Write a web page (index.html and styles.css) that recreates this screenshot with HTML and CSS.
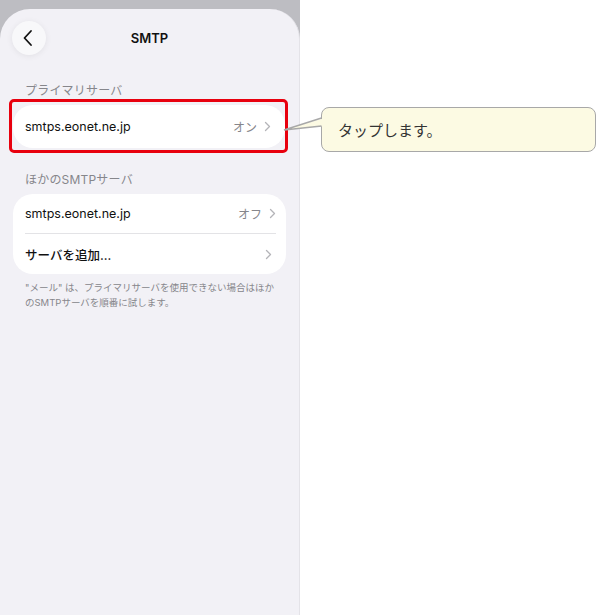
FILE: index.html
```html
<!DOCTYPE html>
<html lang="ja">
<head>
    <meta charset="UTF-8">
    <meta name="viewport" content="width=device-width, initial-scale=1.0">
    <title>SMTP</title>
    <link rel="stylesheet" href="styles.css">
</head>
<body>
    <div class="phone">
        <div class="sheet">
            <div class="nav">
                <div class="back-button">
                    <svg width="12" height="18" viewBox="0 0 12 18"><path d="M9 2 L2.5 9 L9 16" fill="none" stroke="#111" stroke-width="1.8" stroke-linecap="round" stroke-linejoin="round"/></svg>
                </div>
                <div class="nav-title">SMTP</div>
            </div>

            <div class="section-header primary-header">プライマリサーバ</div>
            <div class="highlight">
                <div class="card">
                    <div class="row">
                        <span class="row-label">smtps.eonet.ne.jp</span>
                        <span class="row-value">オン</span>
                        <span class="chevron">
                            <svg width="7" height="11" viewBox="0 0 7 11"><path d="M1.5 1.5 L5.5 5.5 L1.5 9.5" fill="none" stroke="#b4b4b8" stroke-width="1.3" stroke-linecap="round" stroke-linejoin="round"/></svg>
                        </span>
                    </div>
                </div>
            </div>

            <div class="section-header other-header">ほかのSMTPサーバ</div>
            <div class="card card-list">
                <div class="row row-divided">
                    <span class="row-label">smtps.eonet.ne.jp</span>
                    <span class="row-value">オフ</span>
                    <span class="chevron">
                        <svg width="7" height="11" viewBox="0 0 7 11"><path d="M1.5 1.5 L5.5 5.5 L1.5 9.5" fill="none" stroke="#b4b4b8" stroke-width="1.3" stroke-linecap="round" stroke-linejoin="round"/></svg>
                    </span>
                </div>
                <div class="row">
                    <span class="row-label row-label-bold">サーバを追加...</span>
                    <span class="chevron">
                        <svg width="7" height="11" viewBox="0 0 7 11"><path d="M1.5 1.5 L5.5 5.5 L1.5 9.5" fill="none" stroke="#b4b4b8" stroke-width="1.3" stroke-linecap="round" stroke-linejoin="round"/></svg>
                    </span>
                </div>
            </div>
            <div class="footnote">"メール" は、プライマリサーバを使用できない場合はほかのSMTPサーバを順番に試します。</div>
        </div>
    </div>

    <div class="callout">
        <svg class="callout-tail" width="42" height="30" viewBox="0 0 42 30">
            <path d="M42 11 L1 23 L42 19 Z" fill="#fcfae3"/>
            <polyline points="38.5,11 1,23 38.5,19" fill="none" stroke="#a8a8a8" stroke-width="1.5" stroke-linejoin="miter"/>
        </svg>
        <span class="callout-text">タップします。</span>
    </div>
</body>
</html>
```

FILE: styles.css
```css
body {
    margin: 0;
    font-family: 'Inter', 'Noto Sans CJK JP', sans-serif;
    background-color: #fff;
    position: relative;
    width: 601px;
    height: 615px;
    overflow: hidden;
}

.phone {
    width: 300px;
    height: 615px;
    background-color: #bdbdc2;
    padding-top: 9px;
    box-sizing: border-box;
}

.sheet {
    height: 100%;
    background-color: #f2f1f6;
    border-radius: 30px 30px 0 0;
    padding-top: 12px;
    box-sizing: border-box;
    border-right: 1px solid #e4e3e8;
}

.nav {
    position: relative;
    height: 34px;
    display: flex;
    align-items: center;
    justify-content: center;
}

.back-button {
    position: absolute;
    left: 12px;
    top: 0;
    width: 34px;
    height: 34px;
    border-radius: 50%;
    background-color: #f8f8fa;
    box-shadow: 0 1px 6px rgba(0, 0, 0, 0.07);
    display: flex;
    align-items: center;
    justify-content: center;
}

.back-button svg {
    margin-left: -2px;
}

.nav-title {
    font-size: 13px;
    font-weight: 600;
    color: #111;
}

.section-header {
    font-size: 12px;
    color: #86868b;
    padding-left: 25px;
    line-height: 16px;
    letter-spacing: 0.2px;
}

.primary-header {
    margin-top: 28px;
}

.other-header {
    margin-top: 19px;
}

.highlight {
    margin: 0 11px 0 9px;
    border: 3px solid #e8000e;
    border-radius: 5px;
    padding: 3px 0 2px 1px;
}

.card {
    background-color: #fff;
    border-radius: 20px;
}

.card-list {
    margin: 6px 13px 0 13px;
}

.row {
    height: 40px;
    display: flex;
    align-items: center;
    padding: 0 12px 0 12px;
}

.highlight .row {
    height: 43px;
}

.row-divided {
    border-bottom: 1px solid #e3e3e6;
    margin: 0 10px 0 12px;
    padding: 0;
    height: 39px;
}

.row-divided .chevron {
    margin-right: 0;
}

.row-label {
    font-size: 12.5px;
    color: #111;
    flex: 1;
}

.row-label-bold {
    font-weight: 500;
}

.row-value {
    font-size: 12px;
    color: #86868b;
    margin-right: 7px;
}

.chevron {
    display: flex;
    align-items: center;
    margin-right: 2px;
}

.footnote {
    font-size: 9.5px;
    line-height: 15px;
    color: #86868b;
    padding: 6px 25px 0 25px;
}

.callout {
    position: absolute;
    left: 321px;
    top: 107px;
    width: 275px;
    height: 45px;
    box-sizing: border-box;
    background-color: #fcfae3;
    border: 1.5px solid #a8a8a8;
    border-radius: 8px;
    display: flex;
    align-items: center;
    padding-left: 16px;
}

.callout-tail {
    position: absolute;
    left: -39.5px;
    top: -1.5px;
}

.callout-text {
    font-size: 15px;
    color: #333;
    font-family: 'Noto Sans CJK JP', sans-serif;
}
```
